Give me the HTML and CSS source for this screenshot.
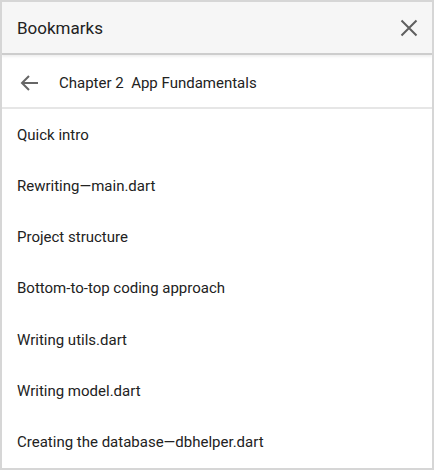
FILE: index.html
```html
<!DOCTYPE html>
<html>
<head>
<meta charset="utf-8">
<link rel="stylesheet" href="styles.css">
</head>
<body>
<div class="panel">
  <header class="header">
    <span class="title">Bookmarks</span>
    <button class="close" aria-label="Close">
      <svg width="18" height="18" viewBox="0 0 18 18"><path d="M1.5 1.5L16.5 16.5M16.5 1.5L1.5 16.5" stroke="#5f5f5f" stroke-width="2" fill="none"/></svg>
    </button>
  </header>
  <div class="sub">
    <svg class="back" width="20" height="18" viewBox="0 0 20 18"><path d="M19 9H3M10 2L3 9l7 7" stroke="#666" stroke-width="2" fill="none"/></svg>
    <span class="chapter">Chapter 2&nbsp; App Fundamentals</span>
  </div>
  <ul class="list">
    <li>Quick intro</li>
    <li>Rewriting—main.dart</li>
    <li>Project structure</li>
    <li>Bottom-to-top coding approach</li>
    <li>Writing utils.dart</li>
    <li>Writing model.dart</li>
    <li>Creating the database—dbhelper.dart</li>
  </ul>
</div>
</body>
</html>
```
FILE: styles.css
```css
html, body { margin: 0; padding: 0; background: #fff; }
body { font-family: Roboto, "Noto Sans", sans-serif; color: #212121; }
.panel {
  width: 434px; height: 470px; box-sizing: border-box;
  border: 2px solid #d6d6d6; background: #fff; overflow: hidden;
}
.header {
  height: 51px; background: #f6f6f6;
  border-bottom: 2px solid #cdcdcd;
  box-shadow: 0 2px 2px rgba(0,0,0,0.06);
  display: flex; align-items: center; justify-content: space-between;
  padding: 0 14px 0 15px; position: relative;
}
.title { font-size: 17px; color: #222; }
.close { background: none; border: 0; padding: 0; display: flex; }
.sub {
  height: 48px; padding-top: 4px; display: flex; align-items: center;
  padding-left: 17px; border-bottom: 2px solid #e6e6e6;
}
.back { margin-right: 20px; }
.chapter { font-size: 15px; color: #222; }
.list { list-style: none; margin: 0; padding: 0; }
.list li {
  height: 51.25px; display: flex; align-items: center;
  padding-left: 15px; font-size: 15px; color: #222;
}
```
